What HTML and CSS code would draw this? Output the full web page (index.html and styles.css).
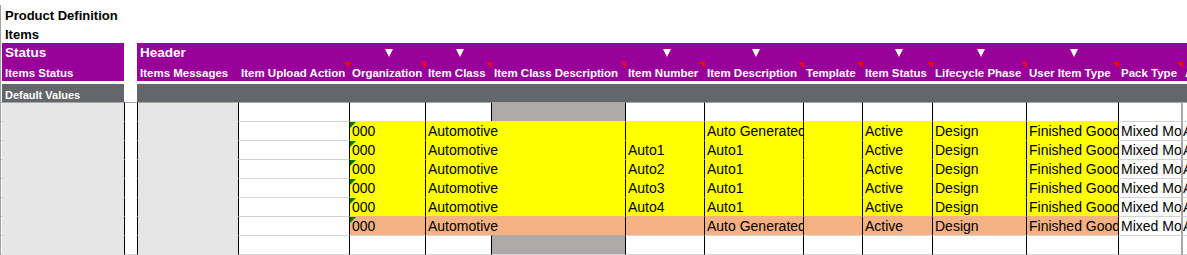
FILE: index.html
```html
<!DOCTYPE html>
<html lang="en">
<head>
    <meta charset="UTF-8">
    <title>Product Definition - Items</title>
    <link rel="stylesheet" href="styles.css">
</head>
<body>
<div class="sheet">
    <div class="title">Product Definition</div>
    <div class="title">Items</div>

    <!-- Fascia viola: intestazioni -->
    <div class="row band top">
        <div class="edge"></div>
        <div class="stat">Status</div>
        <div class="gap"></div>
        <div class="msg">Header</div>
        <div></div>
        <div class="drop"><span class="arrow"></span></div>
        <div class="drop"><span class="arrow"></span></div>
        <div></div>
        <div class="drop"><span class="arrow"></span></div>
        <div class="drop"><span class="arrow"></span></div>
        <div></div>
        <div class="drop"><span class="arrow"></span></div>
        <div class="drop"><span class="arrow"></span></div>
        <div class="drop"><span class="arrow"></span></div>
        <div></div>
        <div></div>
    </div>
    <div class="row band labels">
        <div class="edge"></div>
        <div class="stat">Items Status</div>
        <div class="gap"></div>
        <div class="msg">Items Messages</div>
        <div class="note">Item Upload Action</div>
        <div class="note">Organization</div>
        <div class="note">Item Class</div>
        <div class="note">Item Class Description</div>
        <div class="note">Item Number</div>
        <div class="note">Item Description</div>
        <div class="note">Template</div>
        <div class="note">Item Status</div>
        <div class="note">Lifecycle Phase</div>
        <div class="note">User Item Type</div>
        <div class="note">Pack Type</div>
        <div>A</div>
    </div>

    <!-- Valori di default -->
    <div class="row defaults">
        <div class="edge"></div>
        <div class="stat">Default Values</div>
        <div class="gap"></div>
        <div></div><div></div><div></div><div></div><div></div><div></div>
        <div></div><div></div><div></div><div></div><div></div><div></div><div></div>
    </div>

    <!-- Righe dati -->
    <div class="row data first">
        <div class="edge"></div><div class="stat"></div><div class="gap"></div><div class="msg"></div>
        <div class="line"></div>
        <div class="line"></div>
        <div class="line"></div>
        <div class="line shade"></div>
        <div class="line"></div>
        <div class="line"></div>
        <div class="line"></div>
        <div class="line"></div>
        <div class="line"></div>
        <div class="line"></div>
        <div class="pack"></div>
        <div class="more"></div>
    </div>
    <div class="row data">
        <div class="edge"></div><div class="stat"></div><div class="gap"></div><div class="msg"></div>
        <div class="line"></div>
        <div class="line yel flag">000</div>
        <div class="line yel wide">Automotive</div>
        <div class="line yel"></div>
        <div class="line yel">Auto Generated</div>
        <div class="line yel"></div>
        <div class="line yel">Active</div>
        <div class="line yel">Design</div>
        <div class="line yel">Finished Goods</div>
        <div class="pack">Mixed Mode</div>
        <div class="more">A</div>
    </div>
    <div class="row data">
        <div class="edge"></div><div class="stat"></div><div class="gap"></div><div class="msg"></div>
        <div class="line"></div>
        <div class="line yel flag">000</div>
        <div class="line yel wide">Automotive</div>
        <div class="line yel">Auto1</div>
        <div class="line yel">Auto1</div>
        <div class="line yel"></div>
        <div class="line yel">Active</div>
        <div class="line yel">Design</div>
        <div class="line yel">Finished Goods</div>
        <div class="pack">Mixed Mode</div>
        <div class="more">A</div>
    </div>
    <div class="row data">
        <div class="edge"></div><div class="stat"></div><div class="gap"></div><div class="msg"></div>
        <div class="line"></div>
        <div class="line yel flag">000</div>
        <div class="line yel wide">Automotive</div>
        <div class="line yel">Auto2</div>
        <div class="line yel">Auto1</div>
        <div class="line yel"></div>
        <div class="line yel">Active</div>
        <div class="line yel">Design</div>
        <div class="line yel">Finished Goods</div>
        <div class="pack">Mixed Mode</div>
        <div class="more">A</div>
    </div>
    <div class="row data">
        <div class="edge"></div><div class="stat"></div><div class="gap"></div><div class="msg"></div>
        <div class="line"></div>
        <div class="line yel flag">000</div>
        <div class="line yel wide">Automotive</div>
        <div class="line yel">Auto3</div>
        <div class="line yel">Auto1</div>
        <div class="line yel"></div>
        <div class="line yel">Active</div>
        <div class="line yel">Design</div>
        <div class="line yel">Finished Goods</div>
        <div class="pack">Mixed Mode</div>
        <div class="more">A</div>
    </div>
    <div class="row data">
        <div class="edge"></div><div class="stat"></div><div class="gap"></div><div class="msg"></div>
        <div class="line"></div>
        <div class="line yel flag">000</div>
        <div class="line yel wide">Automotive</div>
        <div class="line yel">Auto4</div>
        <div class="line yel">Auto1</div>
        <div class="line yel"></div>
        <div class="line yel">Active</div>
        <div class="line yel">Design</div>
        <div class="line yel">Finished Goods</div>
        <div class="pack">Mixed Mode</div>
        <div class="more">A</div>
    </div>
    <div class="row data">
        <div class="edge"></div><div class="stat"></div><div class="gap"></div><div class="msg"></div>
        <div class="line"></div>
        <div class="line ora flag">000</div>
        <div class="line ora wide">Automotive</div>
        <div class="line ora"></div>
        <div class="line ora">Auto Generated</div>
        <div class="line ora"></div>
        <div class="line ora">Active</div>
        <div class="line ora">Design</div>
        <div class="line ora">Finished Goods</div>
        <div class="pack">Mixed Mode</div>
        <div class="more">A</div>
    </div>
    <div class="row data last">
        <div class="edge"></div><div class="stat"></div><div class="gap"></div><div class="msg"></div>
        <div class="line"></div>
        <div class="line"></div>
        <div class="line"></div>
        <div class="line shade"></div>
        <div class="line"></div>
        <div class="line"></div>
        <div class="line"></div>
        <div class="line"></div>
        <div class="line"></div>
        <div class="line"></div>
        <div class="pack"></div>
        <div class="more"></div>
    </div>
</div>
</body>
</html>
```
FILE: styles.css
```css
/* Stili di base */
* {
    margin: 0;
    padding: 0;
    box-sizing: border-box;
}
body {
    font-family: "Liberation Sans", Arial, sans-serif;
    background-color: #fff;
    color: #000;
    overflow: hidden;
}
.sheet {
    width: 1187px;
    border-left: 1px solid #a0a0a0;
}
.title {
    height: 19px;
    line-height: 21px;
    padding-left: 4px;
    font-size: 13px;
    font-weight: bold;
}
.title:first-child {
    margin-top: 5px;
}

/* Griglia colonne del foglio */
.row {
    display: grid;
    grid-template-columns: 1px 123px 12px 102px 111px 76px 66px 134px 79px 99px 59px 70px 94px 92px 64px 1fr;
}
.row > div {
    white-space: nowrap;
    overflow: hidden;
}

/* Fascia viola */
.band > div {
    height: 19px;
    background-color: #990099;
    color: #fff;
    font-weight: bold;
    padding-left: 2px;
}
.band > .edge, .band > .gap {
    background-color: #fff;
}
.band > .stat {
    border-right: 1px solid #fff;
    padding-left: 3px;
}
.band > .msg {
    padding-left: 3px;
}
.top > div {
    font-size: 13.5px;
    line-height: 19px;
}
.drop {
    display: flex;
    justify-content: center;
    padding-top: 6px;
}
.arrow {
    width: 0;
    height: 0;
    border-left: 4px solid transparent;
    border-right: 4px solid transparent;
    border-top: 8px solid #fff;
}
.labels > div {
    font-size: 11.5px;
    line-height: 16px;
    padding-top: 3px;
}
.labels > .note {
    position: relative;
}
.note::after {
    content: "";
    position: absolute;
    top: 0;
    right: 0;
    border-top: 6px solid #ff0000;
    border-left: 6px solid transparent;
}

/* Riga valori di default */
.defaults {
    margin-top: 3px;
}
.defaults > div {
    height: 18px;
    background-color: #63666a;
    color: #fff;
    font-size: 11px;
    font-weight: bold;
    line-height: 16px;
    padding: 3px 0 0 3px;
}
.defaults > .edge, .defaults > .gap {
    background-color: #fff;
}
.defaults > .stat {
    border-right: 1px solid #fff;
}

/* Celle dati */
.data > div {
    height: 19px;
    border-top: 1px solid #d4d4d4;
    padding-left: 2px;
    font-size: 14px;
    line-height: 18px;
}
.data .edge {
    padding: 0;
    border-top-color: #bdbdbd;
}
.data .stat {
    background-color: #e7e6e6;
    border-top-color: #e7e6e6;
    border-right: 1px solid #000;
}
.data .gap {
    border-top-color: #fff;
}
.data .msg {
    background-color: #e7e6e6;
    border-top-color: #e7e6e6;
    border-left: 1px solid #000;
    border-right: 1px solid #000;
}
.data .line {
    border-right: 1px solid #000;
}
.data .shade {
    background-color: #aeaaaa;
    border-top-color: #aeaaaa;
}
.data .yel {
    background-color: #ffff00;
    border-top-color: #ffff00;
}
.data .ora {
    background-color: #f4b183;
    border-top-color: #f4b183;
}
.data .wide {
    grid-column: span 2;
}
.data .pack {
    border-right: 2px solid #a6a6a6;
}
.data .more {
    padding-left: 0;
}
.data.first > div {
    border-top-color: #a6a6a6;
}
.data.last > div {
    height: 20px;
    border-bottom: 1px solid #d4d4d4;
}
.data.last > .stat, .data.last > .msg {
    border-bottom-color: #e7e6e6;
}

/* Triangolo verde: numero memorizzato come testo */
.flag {
    position: relative;
}
.flag::before {
    content: "";
    position: absolute;
    top: 0;
    left: 0;
    border-top: 6px solid #007a00;
    border-right: 6px solid transparent;
}
```
